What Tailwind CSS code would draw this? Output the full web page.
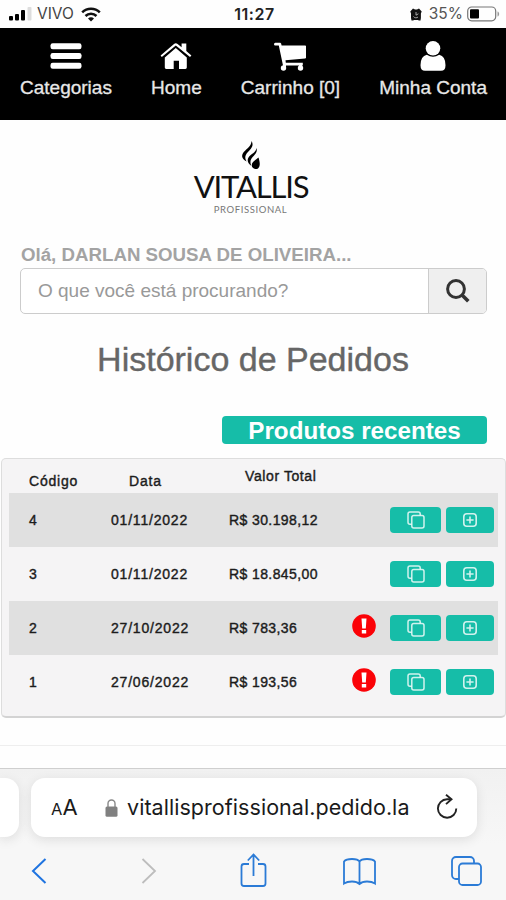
<!DOCTYPE html>
<html lang="pt-BR">

<head>
    <meta charset="UTF-8">
    <meta name="viewport" content="width=device-width, initial-scale=1.0">
    <title>Vitallis Profissional - Histórico de Pedidos</title>
    <script src="https://cdn.jsdelivr.net/npm/@tailwindcss/browser@4"></script>
</head>

<body class="w-[506px] h-[900px] overflow-hidden bg-[#fefefe] font-['Liberation_Sans',Arial,sans-serif] flex flex-col">
    <!-- Shared icons -->
    <svg class="hidden">
        <symbol id="copy" viewBox="0 0 18 18" fill="none" stroke="currentColor" stroke-width="1.5">
            <path d="M4.5 13.2H3A2 2 0 0 1 1 11.2V3a2 2 0 0 1 2-2h8.2a2 2 0 0 1 2 2v1.2" />
            <rect x="4.8" y="4.6" width="12.2" height="12.4" rx="2" />
        </symbol>
        <symbol id="plus" viewBox="0 0 14 14" fill="none" stroke="currentColor" stroke-width="1.6">
            <rect x="0.8" y="0.8" width="12.4" height="12.4" rx="3" />
            <path d="M7 3.4v7.2M3.4 7h7.2" />
        </symbol>
        <symbol id="alert" viewBox="0 0 24 24">
            <circle cx="12" cy="12" r="11.8" fill="#fb0207" />
            <path d="M9.5 4.4h5l-.7 10h-3.6zM9.8 16h4.4v3.6H9.8z" fill="#fff" />
        </symbol>
    </svg>

    <!-- Status bar -->
    <div class="h-7 shrink-0 flex items-center justify-between pl-[9px] pr-[6px] text-[#222] font-[Inter,sans-serif]">
        <div class="w-[200px] flex items-center">
            <svg class="w-[23px] h-[14px]" viewBox="0 0 23 14">
                <rect x="0" y="9" width="4" height="4.5" rx="1" />
                <rect x="6" y="7" width="4" height="6.5" rx="1" />
                <rect x="12" y="3" width="4" height="10.5" rx="1" />
                <rect x="18.5" y="0" width="4" height="13.5" rx="1" fill="#ddd" />
            </svg>
            <span class="ml-[5px] w-[38px] text-[15.5px] leading-7 text-[#444]">VIVO</span>
            <svg class="ml-[6px] w-5 h-[15px]" viewBox="0 0 20 15" fill="none" stroke="#111" stroke-width="2.5">
                <path d="M1.2 5.4a12.5 12.5 0 0 1 17.6 0" />
                <path d="M4.5 9a7.8 7.8 0 0 1 11 0" />
                <path d="M10 14.500l-3-3a4.200 4.200 0 0 1 6 0z" fill="#111" stroke="none" />
            </svg>
        </div>
        <span class="text-[16px] leading-[29px] font-semibold tracking-[0.5px]">11:27</span>
        <div class="w-[200px] flex items-center justify-end">
            <svg class="w-3 h-[13px]" viewBox="0 0 12 13">
                <path d="M.3 3.500L3 .4 5 1.500H7L9 .4l2.700 3.100-.8 2v4.500L10.500 12.500H8.800L8 12H4l-.8.5H1.500L1 10V5.500z" fill="#111" />
                <path d="M6 4v3.200l2.400-1.400M3.500 8.500a3 3 0 0 0 4.500.5" fill="none" stroke="#ccc" stroke-width="0.8" />
            </svg>
            <span class="ml-[7px] text-[15.5px] leading-7 text-[#555]">35%</span>
            <svg class="ml-1 w-[33px] h-4" viewBox="0 0 33 16">
                <rect x="0.7" y="1" width="28" height="13.8" rx="4" fill="none" stroke="#777" stroke-width="1.2" />
                <rect x="3" y="3.3" width="9" height="9.2" rx="1" fill="#000" />
                <path d="M30.500 5.500c2.200.6 2.200 4.400 0 5z" fill="#999" />
            </svg>
        </div>
    </div>

    <!-- Top navigation -->
    <nav class="h-[92px] shrink-0 bg-black text-[#e8e8e8] flex justify-between pl-5 pr-[19px] pt-[12px] text-[19px] leading-[27px] [-webkit-text-stroke:0.3px]">
        <a class="flex flex-col items-center">
            <svg class="w-8 h-[34px]" viewBox="0 0 32 34" fill="#fff">
                <rect x="0.5" y="3.3" width="31" height="6" rx="2.2" />
                <rect x="0.5" y="13" width="31" height="6" rx="2.2" />
                <rect x="0.5" y="22.7" width="31" height="6" rx="2.2" />
            </svg>
            Categorias
        </a>
        <a class="flex flex-col items-center">
            <svg class="w-8 h-[34px]" viewBox="0 0 32 34" fill="#fff">
                <path d="M15.800 8L26.800 17.400V27.600Q26.800 29 25.400 29H19V20.700H13.700V29H6.200Q4.800 29 4.800 27.600V17.400z" />
                <path d="M1.800 17L.6 15.500 14 3.900q1.800-1.300 3.600 0l4 3.300V3.500h4.700v7.600l5.100 4.400L30 17 15.800 5.600z" />
            </svg>
            Home
        </a>
        <a class="flex flex-col items-center">
            <svg class="w-8 h-[34px]" viewBox="0 0 32 34" fill="#fff">
                <path d="M1.300 2.800h5q1 0 1.300 2.800H31.300q.8 0 .8 1V17.200q0 1-1 1.200L11.500 20.300l.3 2.500h17v2.600H9L4.800 5.600H1.300Q0 5.400 0 4.200T1.300 2.800z" />
                <circle cx="9.5" cy="28" r="2.7" />
                <circle cx="26.5" cy="28" r="2.7" />
                <path d="M9 24h3v4H9zM25 24h3v4h-3z" />
            </svg>
            Carrinho [0]
        </a>
        <a class="flex flex-col items-center">
            <svg class="w-8 h-[34px]" viewBox="0 0 32 34" fill="#fff">
                <circle cx="16" cy="8.3" r="7.3" />
                <path d="M9.800 14.800q6.200 3.800 12.400 0 6.300 1.400 6.300 10.500 0 5.500-4.500 5.500H8q-4.500 0-4.500-5.500 0-9.100 6.300-10.500z" />
            </svg>
            Minha Conta
        </a>
    </nav>

    <main class="h-[648px] shrink-0 flex flex-col">
        <!-- Logo -->
        <div class="h-[122px] shrink-0 pt-5 pr-1 flex flex-col items-center font-[Lato,sans-serif] text-[#111]">
            <svg class="w-5 h-[31px]" viewBox="0 0 20 31">
                <path d="M10.500 1c3 5-1 8-4 11.500-2.500 3-3 5.500-.8 9C2 19.500 0 17 1.800 13.500 4 9.500 10.500 7 10.500 1z" />
                <path d="M15.500 8c1.500 5-2.500 7-5 10.500-1.500 2.500-1.300 4.500-.3 7.300C7.500 24 6 21.500 7 18.500 8.800 14.500 15 13 15.500 8z" />
                <path d="M17.500 17.500c1.500 5 2 8.500-.5 11-2.500 1.500-6 0-6.300-3 0-4 4.300-5.500 6.800-8z" />
            </svg>
            <span class="h-[31px] text-[31px] leading-[31px] tracking-[-1.2px]">VITALLIS</span>
            <span class="mt-[2px] pr-px text-[9.5px] leading-[12px] text-[#777] tracking-[0.6px]">PROFISSIONAL</span>
        </div>

        <!-- Search -->
        <div class="px-5">
            <p class="pl-px text-[18.7px] leading-[26px] font-bold text-[#a3a3a3]">Olá, DARLAN SOUSA DE OLIVEIRA...</p>
            <div class="w-[467px] h-[46px] flex border border-[#ccc] rounded-[5px] overflow-hidden bg-white">
                <div class="flex-1 pl-[17px] text-[19px] leading-[44px] text-[#999]">O que você está procurando?</div>
                <button class="w-[58px] border-l border-[#ccc] bg-[#efefef] flex items-center justify-center">
                    <svg class="w-6 h-6" viewBox="0 0 24 24" fill="none" stroke="#333" stroke-width="3">
                        <circle cx="10" cy="10" r="8.4" />
                        <path d="M16 16l6.300 6.300" stroke-width="3.6" />
                    </svg>
                </button>
            </div>
        </div>

        <h1 class="mt-[23px] text-center text-[34px] leading-[44px] text-[#666] [-webkit-text-stroke:0.4px]">Histórico de Pedidos</h1>

        <div class="mt-[35px] pr-[19px] flex justify-end">
            <button class="w-[265px] h-7 rounded-[4px] bg-[#16bda8] text-white text-[24.2px] leading-[29px] font-bold">Produtos recentes</button>
        </div>

        <!-- Orders -->
        <section class="mt-[14px] ml-px h-[260px] shrink-0 rounded-[5px] border border-[#ddd] border-b-2 border-b-[#d3d3d3] bg-[#f5f4f5] pl-[7px] pr-[7px] text-[14px] tracking-[0.8px] text-[#1c1c1c] [-webkit-text-stroke:0.4px]">
            <div class="h-[34px] flex leading-[44px]">
                <span class="w-[120px] pl-5">Código</span>
                <span class="w-[116px]">Data</span>
                <span class="leading-[34px] tracking-[0.6px]">Valor Total</span>
            </div>
            <div class="h-[54px] flex items-center bg-[#e0e0e0] leading-[56px]">
                <span class="w-[102px] pl-5">4</span>
                <span class="w-[118px]">01/11/2022</span>
                <span class="flex-1 tracking-[0.4px]">R$ 30.198,12</span>
                <button class="mr-[5px] w-[51px] h-[26px] rounded-[4px] bg-[#16bda8] text-white/80 flex items-center justify-center"><svg class="size-[18px]"><use href="#copy" /></svg></button>
                <button class="mr-[4px] w-[48px] h-[26px] rounded-[4px] bg-[#16bda8] text-white/80 flex items-center justify-center"><svg class="size-[14px]"><use href="#plus" /></svg></button>
            </div>
            <div class="h-[54px] flex items-center leading-[56px]">
                <span class="w-[102px] pl-5">3</span>
                <span class="w-[118px]">01/11/2022</span>
                <span class="flex-1 tracking-[0.4px]">R$ 18.845,00</span>
                <button class="mr-[5px] w-[51px] h-[26px] rounded-[4px] bg-[#16bda8] text-white/80 flex items-center justify-center"><svg class="size-[18px]"><use href="#copy" /></svg></button>
                <button class="mr-[4px] w-[48px] h-[26px] rounded-[4px] bg-[#16bda8] text-white/80 flex items-center justify-center"><svg class="size-[14px]"><use href="#plus" /></svg></button>
            </div>
            <div class="h-[54px] flex items-center bg-[#e0e0e0] leading-[56px]">
                <span class="w-[102px] pl-5">2</span>
                <span class="w-[118px]">27/10/2022</span>
                <span class="flex-1 tracking-[0.4px]">R$ 783,36</span>
                <svg class="size-6 mr-[14px] mb-[4px]"><use href="#alert" /></svg>
                <button class="mr-[5px] w-[51px] h-[26px] rounded-[4px] bg-[#16bda8] text-white/80 flex items-center justify-center"><svg class="size-[18px]"><use href="#copy" /></svg></button>
                <button class="mr-[4px] w-[48px] h-[26px] rounded-[4px] bg-[#16bda8] text-white/80 flex items-center justify-center"><svg class="size-[14px]"><use href="#plus" /></svg></button>
            </div>
            <div class="h-[54px] flex items-center leading-[56px]">
                <span class="w-[102px] pl-5">1</span>
                <span class="w-[118px]">27/06/2022</span>
                <span class="flex-1 tracking-[0.4px]">R$ 193,56</span>
                <svg class="size-6 mr-[14px] mb-[4px]"><use href="#alert" /></svg>
                <button class="mr-[5px] w-[51px] h-[26px] rounded-[4px] bg-[#16bda8] text-white/80 flex items-center justify-center"><svg class="size-[18px]"><use href="#copy" /></svg></button>
                <button class="mr-[4px] w-[48px] h-[26px] rounded-[4px] bg-[#16bda8] text-white/80 flex items-center justify-center"><svg class="size-[14px]"><use href="#plus" /></svg></button>
            </div>
        </section>

        <div class="mt-[27px] border-t border-[#eee]"></div>
    </main>

    <!-- Browser bar -->
    <footer class="h-[132px] shrink-0 border-t border-[#cfcfcf] bg-[#f7f7f7]">
        <div class="h-[75px] flex items-start pt-[9px] bg-linear-to-b from-[#f1f1f1] to-[#f7f7f7]">
            <div class="w-[19px] h-[59px] rounded-r-[14px] bg-white shadow-[0_3px_12px_rgba(0,0,0,0.1)]"></div>
            <div class="ml-3 w-[446px] h-[59px] rounded-[14px] bg-white shadow-[0_3px_12px_rgba(0,0,0,0.1)] flex items-center pl-[20px] font-[Inter,sans-serif] text-[#1a1a1a]">
                <span class="w-[54px] text-[22px] leading-[59px] pt-px"><span class="text-[16.5px]">A</span>A</span>
                <svg class="w-[13px] h-[18px]" viewBox="0 0 13 18">
                    <rect x="0.5" y="7.5" width="12" height="10.3" rx="1.5" fill="#808080" />
                    <path d="M3 8V4.500a3.500 3.500 0 0 1 7 0V8" fill="none" stroke="#888" stroke-width="1.4" />
                </svg>
                <span class="ml-[9px] w-[309px] text-[21.5px] leading-[59px] whitespace-nowrap tracking-[0.05px]">vitallisprofissional.pedido.la</span>
                <svg class="w-[22px] h-[25px] -mt-[2px]" viewBox="0 0 22 25" fill="none" stroke="#222" stroke-width="1.9">
                    <path d="M14.500 5.300H11a9.200 9.200 0 1 0 9.300 9.200" />
                    <path d="M10 .8l5.500 4.500-5.500 4.800" />
                </svg>
            </div>
        </div>
        <div class="h-[56px] pt-[7px] pl-[31px] flex text-[#2b7bd6]">
            <svg class="w-4 h-10" viewBox="0 0 16 40" fill="none" stroke="#1f74e0" stroke-width="2">
                <path d="M14.500 8L2 20l12.500 12" />
            </svg>
            <svg class="ml-[94px] w-4 h-10" viewBox="0 0 16 40" fill="none" stroke="#bdbdbd" stroke-width="1.8">
                <path d="M1.500 8L14 20 1.500 32" />
            </svg>
            <svg class="ml-[83px] w-[27px] h-10" viewBox="0 0 27 40" fill="none" stroke="currentColor" stroke-width="1.8">
                <path d="M9 13H4a2.500 2.500 0 0 0-2.500 2.500v17A2.500 2.500 0 0 0 4 35h19a2.500 2.500 0 0 0 2.500-2.500v-17A2.500 2.500 0 0 0 23 13h-5M13.500 25V4M7.800 9.500l5.700-6 5.700 6" />
            </svg>
            <svg class="ml-[76px] w-[33px] h-10" viewBox="0 0 33 40" fill="none" stroke="currentColor" stroke-width="1.8">
                <path d="M16.500 33V10.500Q15 8 9 8 3 8 1 10.500V32.500Q4 30.500 9 30.500t7.500 2.500Q19 30.500 24 30.500t8 2V10.500Q30 8 24 8t-7.500 2.500" />
            </svg>
            <svg class="ml-[75px] w-[31px] h-10" viewBox="0 0 31 40" fill="none" stroke="currentColor" stroke-width="1.8">
                <path d="M8 28H5a4 4 0 0 1-4-4V10a4 4 0 0 1 4-4h14a4 4 0 0 1 4 4v2.500" />
                <rect x="8" y="12.5" width="22" height="21.5" rx="3.5" />
            </svg>
        </div>
    </footer>
</body>

</html>
